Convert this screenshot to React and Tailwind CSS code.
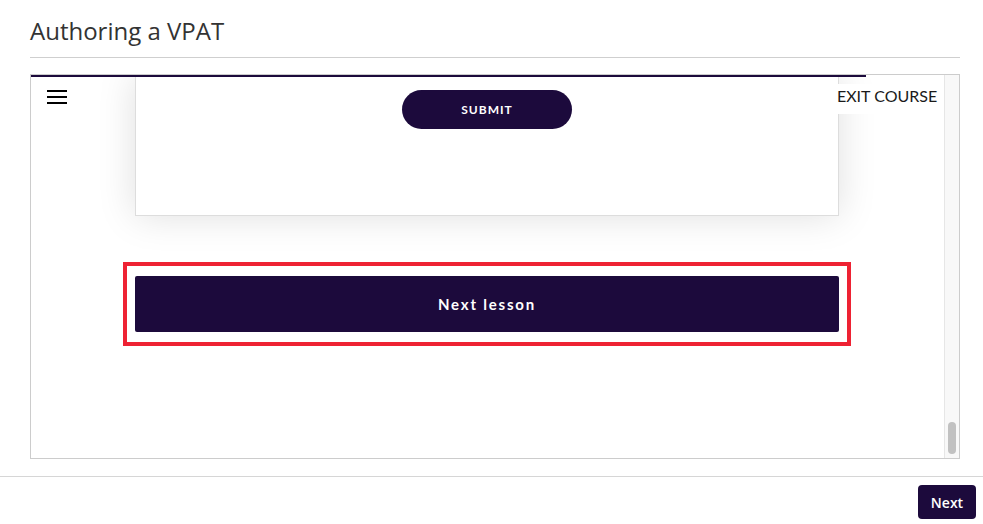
export default function App() {
  const dark = "bg-[#1c0a3c]";
  return (
    <div className="w-[983px] h-[524px] bg-white overflow-hidden flex flex-col" style={{ fontFamily: '"Open Sans", "Liberation Sans", sans-serif' }}>
      <div className="pl-[30px] pr-[23px]">
        <h1 className="pt-[15px] text-[24px] leading-[32px] text-[#333] font-normal" style={{ fontFamily: '"Open Sans", sans-serif' }}>
          Authoring a VPAT
        </h1>
        <div className="mt-[10px] border-t border-[#cfcfcf]" />
        <div className="mt-[16px] h-[385px] border border-[#cccccc] relative flex overflow-hidden">
          <div className="absolute -top-px -left-px w-[836px] h-[3px] bg-[#1c0a3c] z-20" />
          <div className="flex-1 relative overflow-hidden" style={{ fontFamily: 'Lato, "Liberation Sans", sans-serif' }}>
            <div className="pl-[104px] w-[808px]">
              <div className="h-[141px] bg-white border-x border-b border-[#dddddd] shadow-[0_0_36px_rgba(0,0,0,0.13)] flex justify-center">
                <button className={`mt-[15px] w-[170px] h-[39px] rounded-full ${dark} text-white text-[12px] font-bold tracking-[1px]`}>
                  SUBMIT
                </button>
              </div>
            </div>
            <div className="ml-[92px] mt-[46px] w-[728px] h-[84px] border-[4px] border-[#ee2233] px-[8px] py-[10px]">
              <button className={`w-full h-[56px] rounded-[2px] ${dark} text-white text-[15px] font-bold tracking-[1.8px]`}>
                Next lesson
              </button>
            </div>
            <div className="absolute top-[15px] left-[16px] w-[20px] flex flex-col gap-[4px]">
              <div className="h-[2px] bg-black" />
              <div className="h-[2px] bg-black" />
              <div className="h-[2px] bg-black" />
            </div>
            <div className="absolute top-[9px] right-0 w-[106px] h-[30px] bg-white text-[16px] leading-[22px] pt-[1px] text-[#1a1a1a]">
              <span className="-ml-px">EXIT COURSE</span>
            </div>
          </div>
          <div className="w-[15px] bg-[#f8f8f8] border-l border-[#e6e6e6] flex flex-col items-center">
            <div className="mt-[347px] w-[8px] h-[32px] rounded-full bg-[#c1c1c1]" />
          </div>
        </div>
      </div>
      <div className="mt-[17px] border-t border-[#d6d6d6]" />
      <div className="flex justify-end pr-[7px] pt-[8px]">
        <button className={`w-[58px] h-[34px] rounded-[4px] ${dark} text-white text-[14px] font-semibold`}>
          Next
        </button>
      </div>
    </div>
  );
}
